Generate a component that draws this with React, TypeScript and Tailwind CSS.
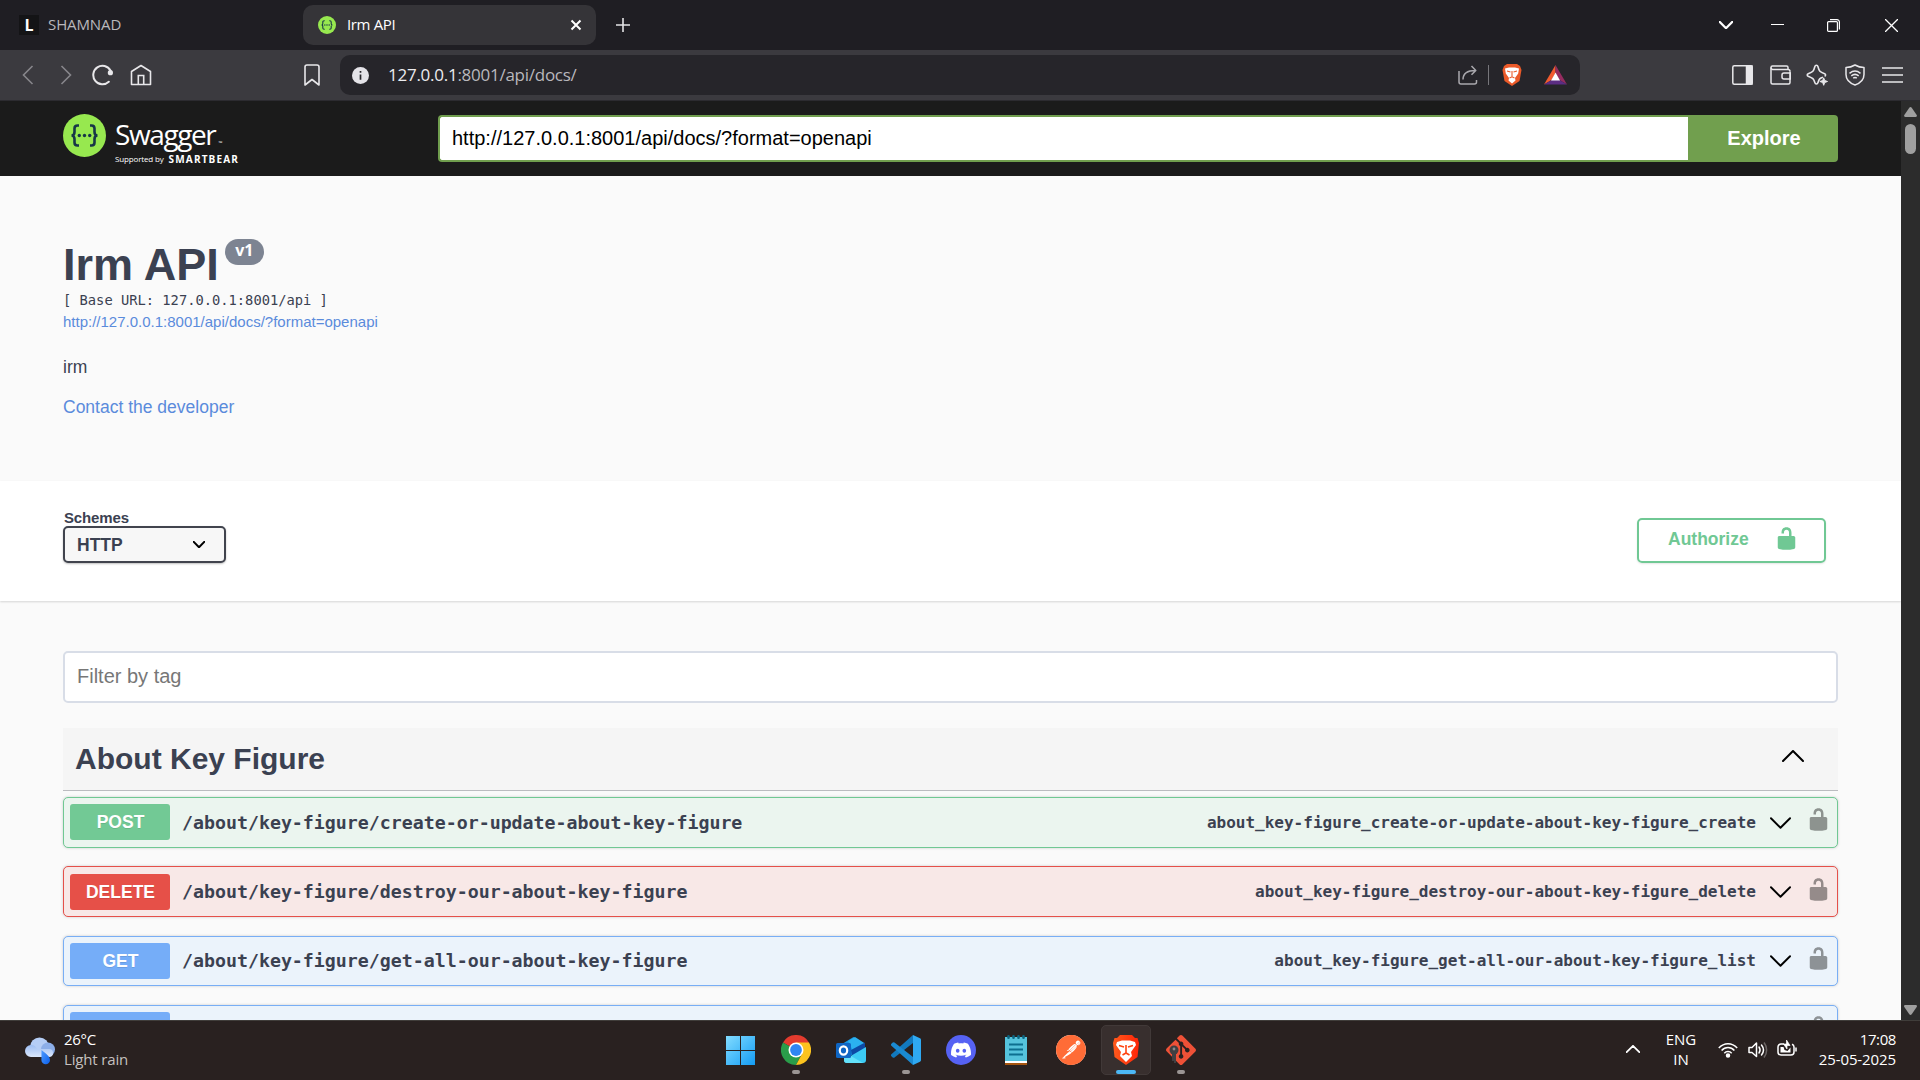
import React from 'react';
import { SiDiscord, SiGit, SiPostman } from 'react-icons/si';

type Method = 'POST' | 'DELETE' | 'GET';

interface Operation {
  method: Method;
  path: string;
  id: string;
}

const operations: Operation[] = [
  {
    method: 'POST',
    path: '/about/key-figure/create-or-update-about-key-figure',
    id: 'about_key-figure_create-or-update-about-key-figure_create',
  },
  {
    method: 'DELETE',
    path: '/about/key-figure/destroy-our-about-key-figure',
    id: 'about_key-figure_destroy-our-about-key-figure_delete',
  },
  {
    method: 'GET',
    path: '/about/key-figure/get-all-our-about-key-figure',
    id: 'about_key-figure_get-all-our-about-key-figure_list',
  },
];

const methodStyles: Record<Method, { row: string; badge: string }> = {
  POST: { row: 'border-[#70c893] bg-[#ebf5ef]', badge: 'bg-[#72c995]' },
  DELETE: { row: 'border-[#e5504a] bg-[#f8e8e7]', badge: 'bg-[#e65048]' },
  GET: { row: 'border-[#78aef5] bg-[#ebf3fb]', badge: 'bg-[#75adf8]' },
};

const UnlockIcon: React.FC<{ className?: string }> = ({ className }) => (
  <svg viewBox="0 0 20 20" className={className} fill="currentColor">
    <path d="M15.8 8H14V5.6C14 2.703 12.665 1 10 1 7.334 1 6 2.703 6 5.6V6h2v-.801C8 3.754 8.797 3 10 3c1.203 0 2 .754 2 2.199V8H4c-.553 0-1 .646-1 1.199V17c0 .549.428 1.139.951 1.307l1.197.387C5.672 18.861 6.55 19 7.1 19h5.8c.549 0 1.428-.139 1.951-.307l1.196-.387c.524-.167.953-.757.953-1.306V9.199C17 8.646 16.352 8 15.8 8z" />
  </svg>
);

const Chevron: React.FC<{ className?: string; up?: boolean; width?: number }> = ({ className, up, width = 2 }) => (
  <svg viewBox="0 0 22 12" className={className} fill="none" stroke="currentColor" strokeWidth={width} strokeLinecap="round" strokeLinejoin="round">
    <path d={up ? 'M1 11 11 1l10 10' : 'M1 1l10 10L21 1'} />
  </svg>
);

const SwaggerMark: React.FC<{ className?: string }> = ({ className }) => (
  <svg viewBox="0 0 43 43" className={className}>
    <circle cx="21.5" cy="21.5" r="21.5" fill="#97e84f" />
    <g fill="none" stroke="#173647" strokeWidth="2.6">
      <path d="M16 11.5h-1.5c-2 0-3 1-3 3v3.500c0 2-1 3.500-3 3.500 2 0 3 1.500 3 3.500v3.500c0 2 1 3 3 3H16M27 11.500h1.500c2 0 3 1 3 3v3.500c0 2 1 3.500 3 3.500-2 0-3 1.500-3 3.500v3.500c0 2-1 3-3 3H27" />
    </g>
    <g fill="#173647">
      <circle cx="16.300" cy="21.500" r="1.700" />
      <circle cx="21.500" cy="21.500" r="1.700" />
      <circle cx="26.700" cy="21.500" r="1.700" />
    </g>
  </svg>
);

const TabStrip = () => (
  <div className="flex h-[50px] items-center bg-[#1f1e23] text-[15px]">
    <div className="flex w-[303px] items-center pl-[19px] text-[#b9b8bc]">
      <span className="flex size-5 items-center justify-center bg-[#141416] pb-px text-[16px] font-bold text-white">L</span>
      <span className="-mt-[2px] ml-[9px] tracking-[-0.1px]">SHAMNAD</span>
    </div>
    <div className="flex h-10 w-[293px] items-center rounded-[10px] bg-[#353438] pl-[15px] pr-[14px] text-white">
      <SwaggerMark className="size-[18px]" />
      <span className="-mt-[2px] ml-[11px] tracking-[-0.35px]">Irm API</span>
      <svg viewBox="0 0 12 12" className="ml-auto size-3" stroke="white" strokeWidth="2">
        <path d="M1.5 1.5l9 9M10.5 1.5l-9 9" />
      </svg>
    </div>
    <svg viewBox="0 0 14 14" className="ml-5 size-[14px]" stroke="#e4e4e6" strokeWidth="1.6">
      <path d="M7 0v14M0 7h14" />
    </svg>
    <div className="ml-auto flex items-center pr-[22px] text-white">
      <Chevron className="h-2 w-[14px]" width={3.4} />
      <svg viewBox="0 0 13 13" className="ml-[38px] size-[13px]" stroke="white" shapeRendering="crispEdges">
        <path d="M0 5.5h13" />
      </svg>
      <svg viewBox="0 0 13 13" className="ml-[43px] size-[13px]" fill="none" stroke="white" strokeWidth="1.2">
        <rect x="0.6" y="2.6" width="9.8" height="9.8" rx="1" />
        <path d="M3 .6h7a2.4 2.4 0 0 1 2.4 2.4v7.5" />
      </svg>
      <svg viewBox="0 0 13 13" className="ml-[45px] size-[13px]" stroke="white" strokeWidth="1.3">
        <path d="M0 0l13 13M13 0L0 13" />
      </svg>
    </div>
  </div>
);

const AddressBar = () => (
  <div className="flex h-[51px] items-center border-b border-[#2c2b30] bg-[#3b3a3f] text-[#e8e7ea]">
    <svg viewBox="0 0 12 20" className="ml-[22px] h-5 w-3" fill="none" stroke="#87868b" strokeWidth="1.6">
      <path d="M10.5 1L1.5 10l9 9" />
    </svg>
    <svg viewBox="0 0 12 20" className="ml-[26px] h-5 w-3" fill="none" stroke="#87868b" strokeWidth="1.6">
      <path d="M1.5 1l9 9-9 9" />
    </svg>
    <svg viewBox="0 0 22 22" className="ml-[20px] size-[22px]" fill="none" stroke="currentColor" strokeWidth="2">
      <path d="M16.800 17.700A9.200 9.200 0 1 1 18.500 6.500" strokeLinecap="round" />
      <circle cx="18.400" cy="8.700" r="2.600" fill="currentColor" stroke="none" />
    </svg>
    <svg viewBox="0 0 22 22" className="ml-4 size-[22px]" fill="none" stroke="currentColor" strokeWidth="1.6">
      <path d="M1.500 7.500 11 1.500l9.500 6V20.500h-19z" strokeLinejoin="round" />
      <path d="M8.300 20.500v-9h5.400v9" />
    </svg>
    <svg viewBox="0 0 16 22" className="ml-[152px] h-[22px] w-4" fill="none" stroke="currentColor" strokeWidth="1.6" strokeLinejoin="round">
      <path d="M1 3a2 2 0 0 1 2-2h10a2 2 0 0 1 2 2v18l-7-5.500L1 21z" />
    </svg>
    <div className="ml-5 flex h-10 w-[1240px] items-center rounded-[10px] bg-[#26252a] pl-3 pr-[13px]">
      <svg viewBox="0 0 18 18" className="size-[17px]">
        <circle cx="9" cy="9" r="9" fill="#e4e3e8" />
        <path d="M9 8v5.500M9 4.200v2" stroke="#26252a" strokeWidth="1.800" />
      </svg>
      <span className="ml-[19px] text-[17px] tracking-[-0.260px] text-[#b9b8bd]">
        <span className="text-[#ececef]">127.0.0.1</span>:8001/api/docs/
      </span>
      <svg viewBox="0 0 20 20" className="ml-auto size-5" fill="none" stroke="#a9a8ad" strokeWidth="1.5" strokeLinejoin="round">
        <path d="M1 6v11a2 2 0 0 0 2 2h13.500a2 2 0 0 0 2-2v-2" />
        <path d="M5 14.500c0-6 4-9 12.500-9M13.500 1l4.300 4.500-4.300 4.300" />
      </svg>
      <span className="ml-[10px] h-5 w-px bg-[#77767b]" />
      <svg viewBox="0 0 20 23" className="-mt-[2px] ml-[13px] h-[23px] w-5">
        <path d="M5 1h10l3 2 1.500 4-2 11L10 23 2.500 18l-2-11L2 3z" fill="#eb5a29" />
        <path d="M3 5.500 7 4.500h6l4 1-.8 5-3.200 4.500.5 2.500-3.500 3-3.500-3 .5-2.500-3.200-4.500z" fill="white" />
        <path d="M5 8l3.500 1M15 8l-3.500 1M10 8v6M7.500 15l2.500-1.200 2.500 1.200" stroke="#eb5a29" strokeWidth="1.100" fill="none" />
      </svg>
      <svg viewBox="0 0 23 20" className="ml-[22px] h-5 w-[23px]">
        <path d="M11.500 0v8L7.500 15 0 19.500z" fill="#f15b2f" />
        <path d="M11.500 0 23 19.500 15.500 15l-4-7z" fill="#952c60" />
        <path d="M0 19.500h23L15.500 15h-8z" fill="#5b2d83" />
        <path d="M11.500 7.500 16 15.500H7z" fill="white" />
      </svg>
    </div>
    <div className="ml-auto flex items-center pr-[17px]">
      <svg viewBox="0 0 21 20" className="h-5 w-[21px]" fill="none" stroke="currentColor" strokeWidth="1.500">
        <rect x=".8" y=".8" width="19.400" height="18.400" rx="1.500" />
        <path d="M14.500 1H20v18h-5.500z" fill="currentColor" />
      </svg>
      <svg viewBox="0 0 21 20" className="ml-[17px] h-5 w-[21px]" fill="none" stroke="currentColor" strokeWidth="1.500" strokeLinejoin="round">
        <path d="M20 6.500v11a1.500 1.500 0 0 1-1.500 1.500h-16A1.500 1.500 0 0 1 1 17.500V2.500A1.500 1.500 0 0 1 2.500 1h14A1.500 1.500 0 0 1 18 2.500v2" />
        <path d="M1 2.500a2 2 0 0 0 1.500 2H18a2 2 0 0 1 2 2M20.500 8h-6.500a2 2 0 0 0-2 2v2a2 2 0 0 0 2 2h6.500z" />
      </svg>
      <svg viewBox="0 0 22 22" className="ml-[15px] size-[22px]" fill="none" stroke="currentColor" strokeWidth="1.600" strokeLinejoin="round">
        <path d="M17 13.200c-3.200 1-3.900 1.600-5 5.300-.6 1.900-2.600 1.900-3.200 0-1.100-3.700-1.800-4.400-6.600-6.300-1.300-.6-1.300-2 0-2.500 4.800-1.700 5.500-2.500 6.600-6.900.5-2 2.700-2 3.200 0 1.100 4.400 1.800 5.200 6.600 6.900 1.300.5 1.300 1.900 0 2.500" />
        <path d="M17.700 13.800l1 2.700 2.800 1-2.800 1-1 2.800-1-2.800-2.800-1 2.800-1z" fill="currentColor" strokeWidth="1" />
      </svg>
      <svg viewBox="0 0 20 22" className="ml-[17px] h-[22px] w-5" fill="none" stroke="currentColor" strokeWidth="1.500" strokeLinejoin="round">
        <path d="M10 1c2.500 1.500 5.500 2.500 9 2.500v7c0 5-3.500 8.500-9 10.500-5.500-2-9-5.500-9-10.500v-7C4.500 3.500 7.500 2.500 10 1z" />
        <path d="M4.500 9.300c3.500-2.800 7.500-2.800 11 0M6.300 11.800c2.500-1.900 4.900-1.900 7.400 0M8.200 14.200c1.300-.9 2.300-.9 3.600 0" />
      </svg>
      <svg viewBox="0 0 21 16" className="ml-[17px] h-4 w-[21px]" stroke="currentColor" strokeWidth="1.700">
        <path d="M0 1h21M0 8h21M0 15h21" />
      </svg>
    </div>
  </div>
);

const Topbar = () => (
  <div className="flex h-[75px] items-start bg-[#1b1b1b] pl-[63px] pt-[13px] text-white">
    <div className="flex w-[375px]">
      <SwaggerMark className="size-[43px]" />
      <div className="ml-[9px]">
        <div className="flex h-[39px] items-start text-[28px] leading-[41px] tracking-[-1.400px]">
          Swagger<span className="ml-[3px] mt-[26px] text-[5px] leading-[6px] tracking-normal">™</span>
        </div>
        <div className="flex h-3 items-center whitespace-nowrap leading-3">
          <span className="text-[8px] tracking-[-0.150px]">Supported by</span>
          <span className="ml-[5px] text-[10px] font-bold tracking-[1.150px]">SMARTBEAR</span>
        </div>
      </div>
    </div>
    <div className="mt-px flex h-[47px] w-[1400px] font-['Liberation_Sans',Arial,sans-serif] text-[20px] leading-[43px]">
      <div className="w-[1250px] rounded-l-[4px] border-2 border-r-0 border-[#709e4e] bg-white pl-3 text-black">
        http://127.0.0.1:8001/api/docs/?format=openapi
      </div>
      <div className="w-[150px] rounded-r-[4px] bg-[#719f4e] pl-[2px] pt-[2px] text-center font-bold">Explore</div>
    </div>
  </div>
);

const Info = () => (
  <div className="h-[305px] px-[63px] pt-[60px] text-[#3b4151]">
    <div className="flex h-14 items-start">
      <h1 className="pt-px text-[45px] font-bold leading-[56px]">Irm API</h1>
      <span className="ml-[6px] mt-[3px] h-[26px] w-[39px] rounded-full bg-[#7d8492] text-center font-['Open_Sans',sans-serif] text-[16px] font-bold leading-[23px] text-white">
        v1
      </span>
    </div>
    <pre className="h-[21px] font-['DejaVu_Sans_Mono',monospace] text-[13.750px] leading-[17px]">[ Base URL: 127.0.0.1:8001/api ]</pre>
    <p className="h-[44px] text-[15px] leading-[18px] text-[#5a8bdc]">http://127.0.0.1:8001/api/docs/?format=openapi</p>
    <p className="h-10 text-[17.500px] leading-5">irm</p>
    <p className="text-[17.500px] leading-5 text-[#5a8bdc]">Contact the developer</p>
  </div>
);

const SchemeBar = () => (
  <div className="flex h-[120px] items-start justify-between bg-white pl-[63px] pr-[75px] shadow-[0_1px_2px_rgba(0,0,0,0.15)]">
    <div className="pt-[27px] text-[#3b4151]">
      <div className="h-[18px] pl-px text-[15px] font-bold leading-[19px] tracking-[-0.150px]">Schemes</div>
      <div className="flex h-[37px] w-[163px] items-center rounded-[5px] border-2 border-[#41444e] bg-[#f7f7f7] pl-3 pr-[19px] text-[17.500px] font-bold shadow-[0_1px_2px_rgba(0,0,0,0.25)]">
        <span className="pt-px">HTTP</span>
        <Chevron className="ml-auto h-[7px] w-3 text-black" width={3.600} />
      </div>
    </div>
    <div className="mt-[37px] flex h-[45px] w-[189px] rounded-[5px] border-2 border-[#70c894] pl-[29px] text-[17.500px] font-bold leading-[38px] text-[#70c894] shadow-[0_1px_2px_rgba(0,0,0,0.1)]">
      Authorize
      <UnlockIcon className="ml-[25px] mt-[6px] size-[25px]" />
    </div>
  </div>
);

const OperationRow: React.FC<{ op: Operation }> = ({ op }) => (
  <div
    className={`mb-[18.750px] flex h-[50.500px] items-center rounded-[5px] border pl-[6px] pr-[6px] shadow-[0_0_3px_rgba(0,0,0,0.19)] ${methodStyles[op.method].row}`}
  >
    <div
      className={`h-9 w-[100px] rounded-[3px] pl-px text-center text-[17.500px] font-bold leading-[36px] text-white [text-shadow:0_1px_0_rgba(0,0,0,0.1)] ${methodStyles[op.method].badge}`}
    >
      {op.method}
    </div>
    <div className="ml-3 font-['DejaVu_Sans_Mono',monospace] text-[18.250px] font-bold">{op.path}</div>
    <div className="ml-auto pt-px font-['DejaVu_Sans_Mono',monospace] text-[16px] font-bold">{op.id}</div>
    <Chevron className="ml-[14px] mt-px h-3 w-[21px] text-black" />
    <UnlockIcon className="-mt-[5px] ml-[15px] size-[25px] text-black/40" />
  </div>
);

const Page = () => (
  <div className="flex h-[919px] overflow-hidden">
    <div className="w-[1901px] bg-[#fafafa]">
      <Topbar />
      <div className="font-['Liberation_Sans',Arial,sans-serif] text-[#3b4151]">
        <Info />
        <SchemeBar />
        <div className="px-[63px] pt-[50px]">
          <div className="h-[52px] w-full rounded-[5px] border-2 border-[#d8dde7] bg-white pl-3 text-[20px] leading-[46px] text-[#777]">
            Filter by tag
          </div>
          <div className="mb-[6.200px] mt-[25px] flex h-[63px] items-center justify-between border-b border-[#bbbcc0] bg-[#f5f5f5] pl-3 pr-[34px]">
            <h2 className="-mt-[2px] text-[30px] font-bold">About Key Figure</h2>
            <Chevron up className="mb-[6px] h-3 w-[22px] text-black" />
          </div>
          {operations.map((op) => (
            <OperationRow key={op.id} op={op} />
          ))}
          {/* next row, mostly below the fold */}
          <div className="flex h-[50.500px] items-center justify-between rounded-[5px] border border-[#78aef5] bg-[#ebf3fb] px-[6px] shadow-[0_0_3px_rgba(0,0,0,0.19)]">
            <div className="h-9 w-[100px] rounded-[3px] bg-[#75adf8]" />
            <UnlockIcon className="-mt-[5px] size-[25px] text-black/40" />
          </div>
        </div>
      </div>
    </div>
    <div className="flex w-[19px] flex-col items-center bg-[#2c2c2c] pb-[5px] pt-[6px]">
      <svg viewBox="0 0 13 10" className="h-[10px] w-[13px]" fill="#9f9f9f">
        <path d="M5.300.8a1.500 1.500 0 0 1 2.400 0l5 7.200c.6 1 0 2-1 2H1.300c-1 0-1.600-1-1-2z" />
      </svg>
      <div className="mt-[7px] h-[30px] w-[11px] rounded-full bg-[#9f9f9f]" />
      <svg viewBox="0 0 13 10" className="mt-auto h-[10px] w-[13px] rotate-180" fill="#9f9f9f">
        <path d="M5.300.8a1.500 1.500 0 0 1 2.400 0l5 7.200c.6 1 0 2-1 2H1.300c-1 0-1.600-1-1-2z" />
      </svg>
    </div>
  </div>
);

const TaskItem: React.FC<{ children: React.ReactNode; running?: boolean; active?: boolean }> = ({
  children,
  running,
  active,
}) => (
  <div className="flex w-[55px] justify-center">
    <div
      className={`flex h-[50px] w-[50px] flex-col items-center rounded-[5px] border pt-[9px] ${
        active ? 'border-[#413938] bg-[#382f2e]' : 'border-transparent'
      }`}
    >
      <div className="flex h-[30px] items-center">{children}</div>
      {running && <div className="mt-[5px] h-1 w-2 rounded-full bg-[#9b9594]" />}
      {active && <div className="mt-[5px] h-1 w-5 rounded-full bg-[#4cb8f5]" />}
    </div>
  </div>
);

const Taskbar = () => (
  <div className="flex h-[60px] border-t border-[#403d3a] bg-[#292120] text-[15px] leading-5 text-white">
    <div className="flex w-[713px] pl-[25px] pt-2">
      <svg viewBox="0 0 30 28" className="mt-[8px] h-7 w-[30px]">
        <defs>
          <linearGradient id="cloud" x1="0" y1="0" x2="0" y2="1">
            <stop offset="0" stopColor="#9dbdf2" />
            <stop offset="1" stopColor="#dbe7fb" />
          </linearGradient>
          <linearGradient id="drop" x1="0" y1="0" x2="1" y2="1">
            <stop offset="0" stopColor="#4f9bff" />
            <stop offset="1" stopColor="#0a5fea" />
          </linearGradient>
        </defs>
        <circle cx="14.500" cy="10" r="9.500" fill="#b5cdf5" />
        <circle cx="23" cy="12.500" r="7" fill="#8caee8" />
        <path d="M6 20a6 6 0 0 1 0-12c3 0 5 1.500 6 4h12a4 4 0 0 1 0 8z" fill="url(#cloud)" />
        <path d="M16.500 13c5 4 8.500 6.500 8.500 10a4.300 4.300 0 0 1-8.600 0z" fill="url(#drop)" />
      </svg>
      <div className="ml-[9px]">
        <div className="tracking-[-0.300px]">26°C</div>
        <div className="tracking-[-0.150px] text-[#c5c0bf]">Light rain</div>
      </div>
    </div>
    <div className="flex pt-1">
      <TaskItem>
        <svg viewBox="0 0 29 29" className="mr-px size-[29px]">
          <defs>
            <linearGradient id="win" x1="0" y1="0" x2="1" y2="1">
              <stop offset="0" stopColor="#82dcff" />
              <stop offset="1" stopColor="#149cf4" />
            </linearGradient>
          </defs>
          <path d="M0 0h14v14H0zM15 0h14v14H15zM0 15h14v14H0zM15 15h14v14H15z" fill="url(#win)" />
        </svg>
      </TaskItem>
      <TaskItem running>
        <svg viewBox="0 0 30 30" className="size-[30px]">
          <path d="M15 15 2 7.500A15 15 0 0 1 28 7.500z" fill="#e33b2e" />
          <path d="M15 15 2 7.500A15 15 0 0 0 15 30l6.100-11.500z" fill="#2a9d4a" />
          <path d="M15 7.500h13A15 15 0 0 1 15 30l6.200-11.400z" fill="#fcc31e" />
          <circle cx="15" cy="15" r="7.500" fill="white" />
          <circle cx="15" cy="15" r="5.900" fill="#3086f3" />
        </svg>
      </TaskItem>
      <TaskItem>
        <svg viewBox="0 0 30 30" className="size-[30px]">
          <path d="M6 9 17.500 2 29 9v4L12 22z" fill="#1793e0" />
          <path d="M12 6l7-4 10 6.500L17 16z" fill="#2bb1f0" />
          <path d="M15 15 29 7.500V13L16 22z" fill="#0d4aa5" />
          <path d="M8 25 30 12v13a3 3 0 0 1-3 3H11a3 3 0 0 1-3-3z" fill="#3ccbf4" />
          <path d="M8 17l19 11H11a3 3 0 0 1-3-3z" fill="#64e1fa" />
          <rect y="8" width="15" height="15" rx="1.500" fill="#0f66c4" />
          <ellipse cx="7.500" cy="15.500" rx="3.700" ry="4.100" fill="none" stroke="white" strokeWidth="2.200" />
        </svg>
      </TaskItem>
      <TaskItem running>
        <svg viewBox="0 0 30 30" className="size-[30px]">
          <path d="M22 0v8L3.500 22.500a1.500 1.500 0 0 1-1.800 0L.4 21.200a1.200 1.200 0 0 1 0-1.900z" fill="#1279be" />
          <path d="M22 30v-8L3.500 7.500a1.500 1.500 0 0 0-1.800 0L.4 8.800a1.200 1.200 0 0 0 0 1.900z" fill="#1a8ad2" />
          <path d="M22 0l7 3.200a1.700 1.700 0 0 1 1 1.600v20.400a1.700 1.700 0 0 1-1 1.600L22 30z" fill="#2fa9f2" />
        </svg>
      </TaskItem>
      <TaskItem>
        <span className="flex size-[30px] items-center justify-center rounded-full bg-[#5662f3]">
          <SiDiscord className="size-5 text-white" />
        </span>
      </TaskItem>
      <TaskItem>
        <svg viewBox="0 0 22 30" className="h-[30px] w-[22px]">
          <path d="M0 2h22v26H0z" fill="#55c3dc" />
          <path d="M0 26h22v2H0z" fill="white" />
          <path d="M0 28h22v2H0z" fill="#a5550f" />
          <path d="M4 9.500h14M4 14.500h14M4 19.500h14" stroke="#0d6f8f" strokeWidth="1.900" />
          <path d="M3.500 1.300v1.500M8.500 1.300v1.500M13.500 1.300v1.500M18.500 1.300v1.500" stroke="#0d6580" strokeWidth="2.600" strokeLinecap="round" />
        </svg>
      </TaskItem>
      <TaskItem>
        <span className="flex rounded-full bg-white">
          <SiPostman className="size-[30px] text-[#ff6c37]" />
        </span>
      </TaskItem>
      <TaskItem active>
        <svg viewBox="0 0 26 30" className="h-[30px] w-[26px]">
          <defs>
            <linearGradient id="brave" x1="0" y1="0" x2="1" y2="0">
              <stop offset="0" stopColor="#ff5a1c" />
              <stop offset="1" stopColor="#ff2508" />
            </linearGradient>
          </defs>
          <path d="M7 0h12l3 3h2.500L26 8l-1.500 14L13 30 1.500 22 0 8l1.500-5H4z" fill="url(#brave)" />
          <path d="M4 7l5-1.500h8L22 7l1 3-5 7 1 4-6 6-6-6 1-4-5-7z" fill="white" />
          <path d="M6 10.500l5 1.500M20 10.500 15 12M13 10v8M9.500 20l3.500-2 3.500 2" stroke="#ff4512" strokeWidth="1.600" fill="none" />
        </svg>
      </TaskItem>
      <TaskItem running>
        <span className="relative flex">
          <SiGit className="size-[30px] text-[#ee5137]" />
          <svg viewBox="0 0 10 18" className="absolute bottom-[2px] left-[3px] h-[18px] w-[10px]">
            <circle cx="5" cy="5" r="4.500" fill="#3f3f42" />
            <path d="M3 8h4v10H5v-2H3z" fill="#3f3f42" />
            <circle cx="5" cy="4" r="1.400" fill="#8a8a8a" />
          </svg>
        </span>
      </TaskItem>
    </div>
    <div className="ml-auto flex pr-6 pt-2">
      <Chevron up className="mt-[16px] h-2 w-[14px]" width={2.800} />
      <div className="ml-[25px] w-[32px] text-center">
        <div>ENG</div>
        <div>IN</div>
      </div>
      <svg viewBox="0 0 20 16" className="ml-[21px] mt-[13px] h-4 w-5" fill="none" stroke="white" strokeWidth="1.500">
        <path d="M.8 6C6 .2 14 .2 19.200 6M3.600 8.600c3.600-4 9.200-4 12.800 0M6.300 11.200c2-2.200 5.400-2.200 7.400 0" />
        <circle cx="10" cy="13.500" r="1.500" fill="white" />
      </svg>
      <svg viewBox="0 0 20 18" className="ml-[10px] mt-[12px] h-[18px] w-5" fill="none" stroke="white" strokeWidth="1.500" strokeLinejoin="round">
        <path d="M1 6.500h3L8.500 2v13.500L4 11.500H1z" />
        <path d="M11 6c1.300 1.800 1.300 4.200 0 6M13.500 4c2.400 3 2.400 7 0 10" strokeLinecap="round" />
        <path d="M16 1.500c3.500 4.500 3.500 10.500 0 15" stroke="#6b6564" />
      </svg>
      <svg viewBox="0 0 20 18" className="ml-[9px] mt-[10px] h-[18px] w-5" fill="none" stroke="white" strokeWidth="1.500">
        <path d="M7 5H4a3 3 0 0 0-3 3v5a3 3 0 0 0 3 3h10a3 3 0 0 0 3-3V8a3 3 0 0 0-2-2.800M19 8.500v4" />
        <path d="M3.500 8h3l1 3 3 1 3-3.500v5h-10z" fill="white" stroke="none" />
        <path d="M9.500 1v4h-3l3.500 5V6.500h3z" fill="white" stroke="white" strokeWidth=".7" />
      </svg>
      <div className="ml-[20px] w-[79px] text-right">
        <div className="tracking-[-0.400px]">17:08</div>
        <div className="whitespace-nowrap tracking-[-0.100px]">25-05-2025</div>
      </div>
    </div>
  </div>
);

export default function App() {
  return (
    <div className="h-[1080px] w-[1920px] overflow-hidden font-['Open_Sans','Noto_Sans',sans-serif]">
      <TabStrip />
      <AddressBar />
      <Page />
      <Taskbar />
    </div>
  );
}
